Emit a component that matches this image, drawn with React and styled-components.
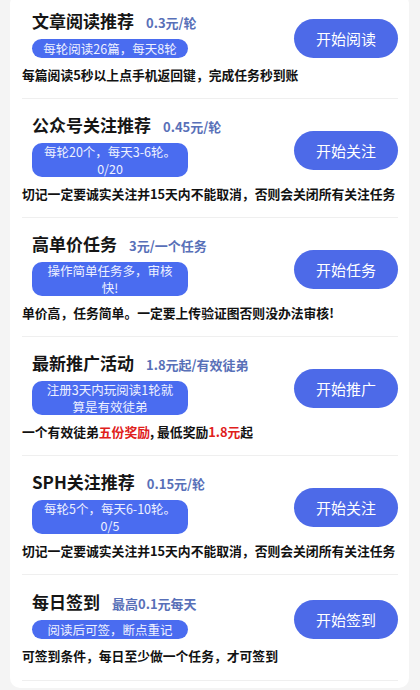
import React from 'react';
import styled, { createGlobalStyle } from 'styled-components';

const GlobalStyle = createGlobalStyle`
    body {
        margin: 0;
        background: #f4f4f4;
        font-family: "Noto Sans CJK SC", "Noto Sans", sans-serif;
    }
`;

const Page = styled.div`
    width: 420px;
    height: 690px;
    overflow: hidden;
    padding: 0 11px 0 10px;
    box-sizing: border-box;
`;

// the list is scrolled a little, so the card top sits above the window
const Card = styled.div`
    margin-top: -6px;
    background: #fff;
    border-radius: 10px;
    padding: 0 11px 7px 12px;
`;

const Item = styled.div`
    padding: 13px 0 14px;
    border-top: ${p => (p.$first ? 'none' : '1px solid #efefef')};
    &:last-child {
        border-bottom: 1px solid #efefef;
        padding-bottom: 15px;
    }
`;

const Top = styled.div`
    display: flex;
    align-items: center;
    justify-content: space-between;
    padding-left: 10px;
`;

const Left = styled.div`
    display: flex;
    flex-direction: column;
    align-items: flex-start;
`;

const TitleRow = styled.div`
    display: flex;
    align-items: baseline;
    gap: 12px;
    height: 26px;
    line-height: 26px;
`;

const Title = styled.span`
    font-size: 17px;
    font-weight: 700;
    color: #151515;
`;

const Price = styled.span`
    font-size: 13px;
    font-weight: 700;
    color: #5870b8;
`;

const Badge = styled.div`
    margin-top: 5px;
    width: 156px;
    box-sizing: border-box;
    padding: ${p => (p.$single ? '1px 8px' : '0 8px')};
    background: #4a6cf0;
    color: #eef1ff;
    border-radius: 10px;
    font-size: 12.5px;
    font-weight: 400;
    text-align: center;
`;

const BadgeLine = styled.div`
    line-height: 17px;
    height: 17px;
    white-space: nowrap;
`;

const Button = styled.button`
    margin-top: 12px;
    width: 104px;
    height: 39px;
    border: none;
    border-radius: 20px;
    background: #4d6ae8;
    color: #fff;
    font-family: inherit;
    font-size: 15px;
    font-weight: 400;
    cursor: pointer;
`;

const Desc = styled.div`
    margin-top: 8px;
    font-size: 12.8px;
    font-weight: 700;
    line-height: 18px;
    color: #111;
    white-space: nowrap;
`;

const Red = styled.span`
    color: #e0201b;
`;

const tasks = [
    {
        title: '文章阅读推荐',
        price: '0.3元/轮',
        badge: ['每轮阅读26篇，每天8轮'],
        button: '开始阅读',
        desc: '每篇阅读5秒以上点手机返回键，完成任务秒到账',
    },
    {
        title: '公众号关注推荐',
        price: '0.45元/轮',
        badge: ['每轮20个，每天3-6轮。', '0/20'],
        button: '开始关注',
        desc: '切记一定要诚实关注并15天内不能取消，否则会关闭所有关注任务',
    },
    {
        title: '高单价任务',
        price: '3元/一个任务',
        badge: ['操作简单任务多，审核', '快!'],
        button: '开始任务',
        desc: '单价高，任务简单。一定要上传验证图否则没办法审核!',
    },
    {
        title: '最新推广活动',
        price: '1.8元起/有效徒弟',
        badge: ['注册3天内玩阅读1轮就', '算是有效徒弟'],
        button: '开始推广',
        desc: (
            <>
                一个有效徒弟<Red>五份奖励</Red>, 最低奖励<Red>1.8元</Red>起
            </>
        ),
    },
    {
        title: 'SPH关注推荐',
        price: '0.15元/轮',
        badge: ['每轮5个，每天6-10轮。', '0/5'],
        button: '开始关注',
        desc: '切记一定要诚实关注并15天内不能取消，否则会关闭所有关注任务',
    },
    {
        title: '每日签到',
        price: '最高0.1元每天',
        badge: ['阅读后可签，断点重记'],
        button: '开始签到',
        desc: '可签到条件，每日至少做一个任务，才可签到',
    },
];

const App = () => {
    return (
        <Page>
            <GlobalStyle />
            <Card>
                {tasks.map((t, i) => (
                    <Item key={i} $first={i === 0}>
                        <Top>
                            <Left>
                                <TitleRow>
                                    <Title>{t.title}</Title>
                                    <Price>{t.price}</Price>
                                </TitleRow>
                                <Badge $single={t.badge.length === 1}>
                                    {t.badge.map((line, j) => (
                                        <BadgeLine key={j}>{line}</BadgeLine>
                                    ))}
                                </Badge>
                            </Left>
                            <Button>{t.button}</Button>
                        </Top>
                        <Desc>{t.desc}</Desc>
                    </Item>
                ))}
            </Card>
        </Page>
    );
};

export default App;
